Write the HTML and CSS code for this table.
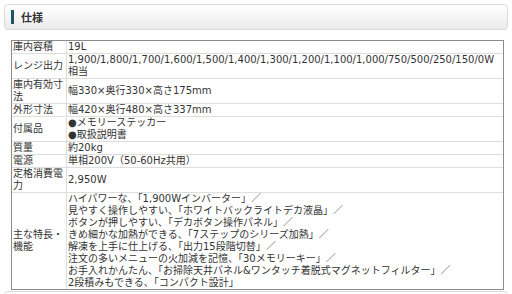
FILE: index.html
```html
<!DOCTYPE html>
<html lang="ja">
<head>
<meta charset="utf-8">
<title>仕様</title>
<link rel="stylesheet" href="styles.css">
</head>
<body>
<section class="spec">
  <h2 class="heading">仕様</h2>
  <table class="spec-table">
    <tr><th>庫内容積</th><td>19L</td></tr>
    <tr><th>レンジ出力</th><td>1,900/1,800/1,700/1,600/1,500/1,400/1,300/1,200/1,100/1,000/750/500/250/150/0W相当</td></tr>
    <tr><th>庫内有効寸法</th><td>幅330×奥行330×高さ175mm</td></tr>
    <tr><th>外形寸法</th><td>幅420×奥行480×高さ337mm</td></tr>
    <tr><th>付属品</th><td>●メモリーステッカー<br>●取扱説明書</td></tr>
    <tr><th>質量</th><td>約20kg</td></tr>
    <tr><th>電源</th><td>単相200V（50-60Hz共用）</td></tr>
    <tr><th>定格消費電力</th><td>2,950W</td></tr>
    <tr><th>主な特長・機能</th><td>ハイパワーな、「1,900Wインバーター」／<br>見やすく操作しやすい、「ホワイトバックライトデカ液晶」／<br>ボタンが押しやすい、「デカボタン操作パネル」／<br>きめ細かな加熱ができる、「7ステップのシリーズ加熱」／<br>解凍を上手に仕上げる、「出力15段階切替」／<br>注文の多いメニューの火加減を記憶、「30メモリーキー」／<br>お手入れかんたん、「お掃除天井パネル&amp;ワンタッチ着脱式マグネットフィルター」／<br>2段積みもできる、「コンパクト設計」</td></tr>
  </table>
  <div class="heading"></div>
</section>
</body>
</html>
```

FILE: styles.css
```css
html, body {
  margin: 0;
  padding: 0;
  background: #fff;
}

body {
  padding: 4px 4px 0 4px;
  font-family: "DejaVu Sans", "Noto Sans CJK JP", sans-serif;
  color: #333;
}

.heading {
  margin: 0;
  height: 26px;
  box-sizing: border-box;
  border: 1px solid #dadada;
  border-radius: 4px;
  background: linear-gradient(#ffffff, #ebebeb);
  display: flex;
  align-items: center;
  gap: 7px;
  padding-left: 6px;
  font-family: "Noto Sans CJK JP", sans-serif;
  font-size: 11px;
  font-weight: bold;
  color: #333;
}

.heading::before {
  content: "";
  width: 3px;
  height: 14px;
  background: #1e5566;
}

.spec-table {
  border-collapse: separate;
  border-spacing: 0;
  border: 1px solid #8c8c8c;
  width: 493px;
  margin: 10px 4px 1px 7px;
}

.spec-table th,
.spec-table td {
  padding: 0 1px;
  font-size: 10px;
  line-height: 12px;
  font-weight: normal;
  text-align: left;
  vertical-align: middle;
  border-bottom: 1px solid #dedede;
}

.spec-table tr:last-child th,
.spec-table tr:last-child td {
  border-bottom: 0;
}

.spec-table th {
  width: 52px;
  border-right: 1px solid #dedede;
}
```
